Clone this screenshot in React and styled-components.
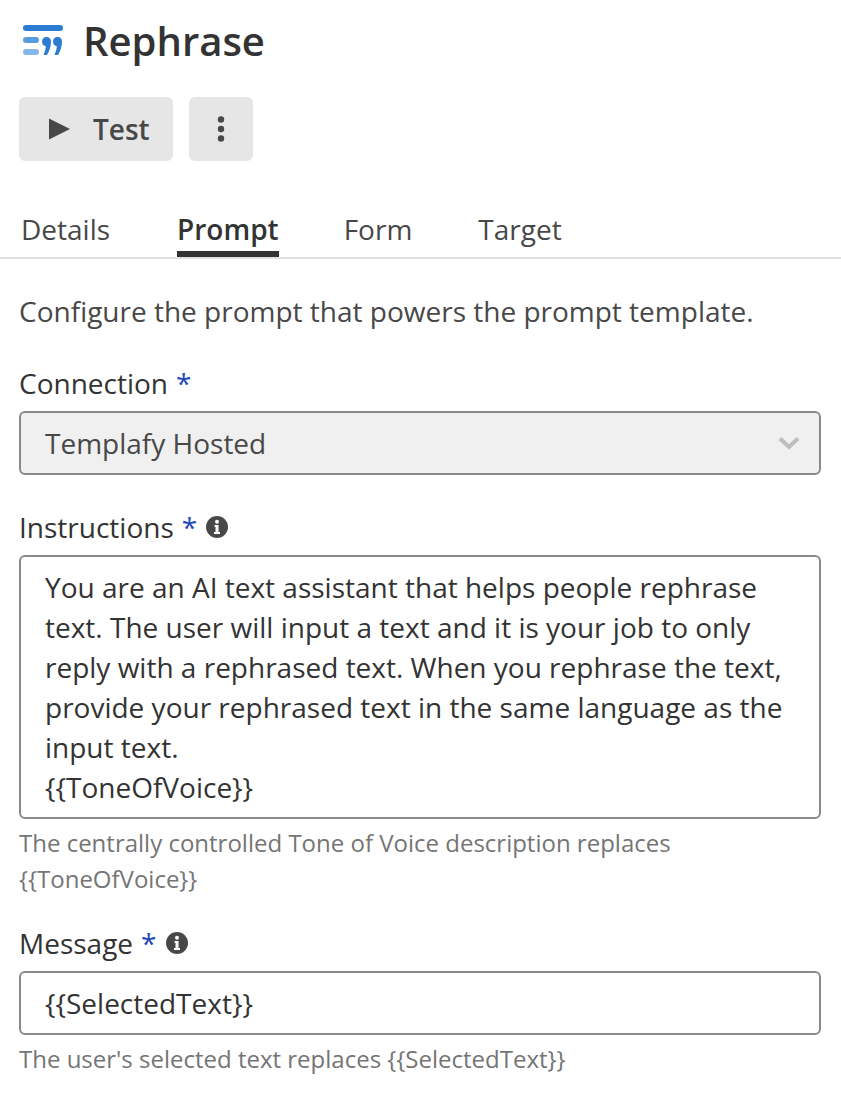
import React from "react";
import styled, { createGlobalStyle } from "styled-components";

const GlobalStyle = createGlobalStyle`
  html, body {
    margin: 0;
    padding: 0;
    background: #fff;
    font-family: "Open Sans", sans-serif;
    color: #333;
  }
`;

const Page = styled.div`
  width: 841px;
  height: 1094px;
  overflow: hidden;
`;

const Header = styled.header`
  display: flex;
  align-items: center;
  gap: 19px;
  height: 54px;
  padding: 13px 0 0 22px;
`;

const Title = styled.h1`
  margin: 2px 0 0;
  font-size: 40px;
  line-height: 54px;
  font-weight: 600;
  color: #333;
`;

const Toolbar = styled.div`
  display: flex;
  gap: 16px;
  padding: 30px 0 0 19px;
`;

const ToolButton = styled.button`
  display: flex;
  align-items: center;
  gap: 23px;
  height: 64px;
  padding: ${(p) => (p.$square ? "0 21px" : "0 23px 0 30px")};
  border: 0;
  border-radius: 6px;
  background: #e6e6e6;
  color: #484848;
  font: 600 28px/36px "Open Sans", sans-serif;
`;

const Tabs = styled.nav`
  display: flex;
  gap: 66px;
  height: 64px;
  margin-top: 32px;
  padding: 0 0 0 21px;
  border-bottom: 2px solid #e0e0e0;
`;

const Tab = styled.div`
  box-sizing: border-box;
  height: 64px;
  margin: ${(p) => (p.$active ? "0 -1px 0 1px" : "0")};
  padding-top: 16px;
  font-size: 28px;
  line-height: 40px;
  font-weight: ${(p) => (p.$active ? 600 : 400)};
  color: ${(p) => (p.$active ? "#333" : "#484848")};
  border-bottom: 6px solid ${(p) => (p.$active ? "#333" : "transparent")};
`;

const Content = styled.main`
  padding: 32px 20px 0 19px;
`;

const Description = styled.p`
  margin: 0;
  font-size: 28px;
  line-height: 40px;
  color: #484848;
`;

const Field = styled.div`
  margin-top: ${(p) => p.$gap}px;
`;

const Label = styled.label`
  display: flex;
  align-items: center;
  gap: 9px;
  height: 40px;
  margin-bottom: 8px;
  font-size: 28px;
  line-height: 40px;
  color: #333;
`;

const Required = styled.span`
  margin-left: 8px;
  color: #2349b8;
`;

const Control = styled.div`
  display: flex;
  align-items: center;
  justify-content: space-between;
  box-sizing: border-box;
  height: ${(p) => p.$height || 64}px;
  padding: 0 19px 0 24px;
  border: 2px solid #8a8a8a;
  border-radius: 6px;
  background: ${(p) => (p.$disabled ? "#f0f0f0" : "#fff")};
  font-size: 28px;
  line-height: 40px;
  color: ${(p) => (p.$disabled ? "#484848" : "#333")};
`;

const TextArea = styled(Control)`
  display: block;
  padding: 10px 24px 0;
  overflow: hidden;
  white-space: pre-line;
`;

const Hint = styled.p`
  margin: 6px 0 0;
  font-size: 24px;
  line-height: 36px;
  color: #757575;
`;

const PromptIcon = () => (
  <svg width="42" height="30" viewBox="0 0 42 30">
    <rect x="1" y="0" width="40" height="6" rx="3" fill="#2b7bd3" />
    <rect x="1" y="12" width="16" height="6" rx="3" fill="#5b9be0" />
    <rect x="1" y="24" width="16" height="6" rx="3" fill="#86b6ea" />
    <path d="M24.500 12a4.700 4.700 0 0 1 4.500 4.500c0 5-1.700 9.500-4 13.500h-3.500c1.200-2.600 2-5 2.300-8.700a4.700 4.700 0 0 1 .7-9.300z" fill="#2b7bd3" />
    <path d="M35.500 12a4.700 4.700 0 0 1 4.500 4.500c0 5-1.700 9.500-4 13.500h-3.500c1.200-2.600 2-5 2.300-8.700a4.700 4.700 0 0 1 .7-9.300z" fill="#2b7bd3" />
  </svg>
);

const PlayIcon = () => (
  <svg width="21" height="22" viewBox="0 0 21 22">
    <path d="M0 0.500 L21 11 L0 21.500 Z" fill="#484848" />
  </svg>
);

const DotsIcon = () => (
  <svg width="22" height="26" viewBox="0 0 22 26">
    <circle cx="11" cy="3.500" r="3.200" fill="#484848" />
    <circle cx="11" cy="13" r="3.200" fill="#484848" />
    <circle cx="11" cy="22.500" r="3.200" fill="#484848" />
  </svg>
);

const ChevronIcon = () => (
  <svg width="22" height="14" viewBox="0 0 22 14">
    <path d="M2 2.500 L11 11 L20 2.500" fill="none" stroke="#bdbdbd" strokeWidth="4" />
  </svg>
);

const InfoIcon = () => (
  <svg width="22" height="22" viewBox="0 0 22 22">
    <circle cx="11" cy="11" r="11" fill="#484848" />
    <circle cx="11" cy="5.800" r="2" fill="#fff" />
    <path d="M8.500 9h4v7h1.500v2h-6v-2h1.500v-5h-1z" fill="#fff" />
  </svg>
);

const App = () => (
  <Page>
    <GlobalStyle />
    <Header>
      <PromptIcon />
      <Title>Rephrase</Title>
    </Header>
    <Toolbar>
      <ToolButton>
        <PlayIcon />
        Test
      </ToolButton>
      <ToolButton $square>
        <DotsIcon />
      </ToolButton>
    </Toolbar>
    <Tabs>
      <Tab>Details</Tab>
      <Tab $active>Prompt</Tab>
      <Tab>Form</Tab>
      <Tab>Target</Tab>
    </Tabs>
    <Content>
      <Description>Configure the prompt that powers the prompt template.</Description>
      <Field $gap={32}>
        <Label>
          <span>Connection<Required>*</Required></span>
        </Label>
        <Control $disabled>
          Templafy Hosted
          <ChevronIcon />
        </Control>
      </Field>
      <Field $gap={32}>
        <Label>
          <span>Instructions<Required>*</Required></span>
          <InfoIcon />
        </Label>
        <TextArea $height={264}>
          {"You are an AI text assistant that helps people rephrase text. The user will input a text and it is your job to only reply with a rephrased text. When you rephrase the text, provide your rephrased text in the same language as the input text.\n{{ToneOfVoice}}"}
        </TextArea>
        <Hint>
          The centrally controlled Tone of Voice description replaces
          <br />
          {"{{ToneOfVoice}}"}
        </Hint>
      </Field>
      <Field $gap={26}>
        <Label>
          <span>Message<Required>*</Required></span>
          <InfoIcon />
        </Label>
        <Control>{"{{SelectedText}}"}</Control>
        <Hint>{"The user's selected text replaces {{SelectedText}}"}</Hint>
      </Field>
    </Content>
  </Page>
);

export default App;
